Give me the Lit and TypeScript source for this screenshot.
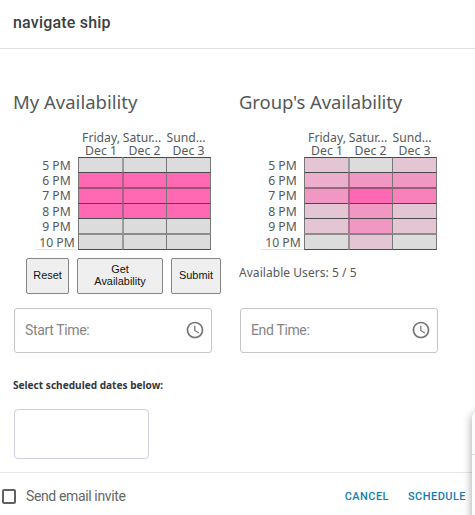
import { LitElement, html, css } from "lit";
import { customElement, property } from "lit/decorators.js";

@customElement("availability-grid")
class AvailabilityGrid extends LitElement {
  @property({ attribute: false }) levels: number[][] = [];

  static styles = css`
    :host { display: block; color: #55595b; font-family: "Noto Sans", "Open Sans", sans-serif; }
    .grid {
      display: grid;
      grid-template-columns: 43px 44px 44px 45px;
      grid-template-rows: 27px 15px 15px 16px 15px 15px 17px;
      margin-left: 21px;
      width: 176px;
    }
    .day { display: grid; grid-template-rows: 13px 13px; padding-top: 1px; font-size: 12.2px; line-height: 13px; white-space: nowrap; justify-items: center; }
    .day.first { padding-left: 2px; }
    .day.mid { margin-left: -4px; }
    .day.last { margin-right: 5px; }
    .day.mid .date { padding-left: 5px; }
    .day.last .date { padding-left: 5px; }
    .time { font-size: 12.2px; line-height: 17px; text-align: center; white-space: nowrap; }
    .time.end { border-bottom: 1px solid #e2e2e2; box-sizing: border-box; line-height: 19px; padding-left: 1px; }
    .cell { box-sizing: border-box; border-left: 1px solid #777; border-top: 1px solid #4a4a4a; }
    .cell.soft { border-top: 2px solid rgba(60, 60, 60, .5); }
    .cell.middle { border-left: 2px solid rgba(90, 90, 90, .5); }
    .cell.right { border-right: 1px solid #777; }
    .cell.bottom { border-bottom: 1px solid #4a4a4a; }
    .l0 { background-color: #dcdcdc; }
    .l1 { background-color: #e4c5d4; }
    .l2 { background-color: #ebaecc; }
    .l3 { background-color: #f197c3; }
    .l4 { background-color: #f880bb; }
    .l5 { background-color: #ff69b4; }
  `;

  render() {
    const times = ["5 PM", "6 PM", "7 PM", "8 PM", "9 PM", "10 PM"];
    return html`<div class="grid">
      <div></div>
      <div class="day first"><span>Friday,</span><span class="date">Dec 1</span></div>
      <div class="day mid"><span>Satur...</span><span class="date">Dec 2</span></div>
      <div class="day last"><span>Sund...</span><span class="date">Dec 3</span></div>
      ${times.map((t, r) => html`
        <div class="time ${r === 5 ? "end" : ""}">${t}</div>
        ${this.levels[r].map((l, c) => html`<div class="cell l${l} ${c === 1 ? "middle" : ""} ${c === 2 ? "right" : ""} ${r === 2 || r === 5 ? "soft" : ""} ${r === 5 ? "bottom" : ""}"></div>`)}
      `)}
    </div>`;
  }
}

@customElement("time-field")
class TimeField extends LitElement {
  @property() label = "";

  static styles = css`
    :host {
      display: flex; align-items: center; justify-content: space-between;
      box-sizing: border-box; width: 198px; height: 45px; padding: 0 6px 1px 10px;
      border: 1px solid #c6c6c6; border-radius: 3px;
      font: 14px/18px Roboto, sans-serif; color: #858585; letter-spacing: -0.35px;
    }
    svg { width: 20px; height: 20px; fill: #737373; display: block; }
  `;

  render() {
    return html`<span>${this.label}</span>
      <svg viewBox="0 0 24 24"><path d="M11.99 2C6.47 2 2 6.48 2 12s4.47 10 9.99 10C17.52 22 22 17.52 22 12S17.52 2 11.99 2zM12 20c-4.42 0-8-3.58-8-8s3.58-8 8-8 8 3.58 8 8-3.58 8-8 8zM12.5 7H11v6l5.25 3.15.75-1.23-4.5-2.67z"/></svg>`;
  }
}

@customElement("app-root")
class AppRoot extends LitElement {
  static styles = css`
    :host {
      display: flex; flex-direction: column; position: relative; overflow: hidden;
      width: 475px; height: 515px; background: #fff; color: #55595b;
      font-family: "Noto Sans", "Open Sans", sans-serif;
    }
    header {
      box-sizing: border-box; height: 49px; padding: 13px 13px 0; border-bottom: 1px solid #e0e0e0;
      font: 500 16px/20px Roboto, sans-serif; color: #3c4043; letter-spacing: 0.2px;
    }
    main { display: grid; grid-template-columns: 226px 226px; padding-left: 14px; height: 423px; align-content: start; }
    h2 { margin: 41px 0 0 -1px; font-size: 18.5px; font-weight: 400; line-height: 24px; height: 25px; white-space: nowrap; }
    .group { letter-spacing: -0.1px; }
    availability-grid { margin-top: 15px; }
    .actions { display: flex; gap: 8px; margin: 8px 0 0 12px; height: 36px; }
    button {
      box-sizing: border-box; padding: 0 0 2px; border: 1px solid #858585; border-radius: 2px; background: #efefef;
      font: 10.9px/12px "Liberation Sans", sans-serif; color: #111;
    }
    .reset { width: 43px; }
    .get { width: 86px; }
    .submit { width: 50px; }
    .users { margin: 14px 0 0 -1px; height: 30px; font-size: 12px; line-height: 17px; white-space: nowrap; letter-spacing: 0.05px; }
    time-field { margin-top: 14px; }
    .pick { margin: 24px 0 0 -1px; font-size: 10.1px; line-height: 16px; font-weight: 700; white-space: nowrap; color: #33383b; }
    .dates { box-sizing: border-box; width: 135px; height: 50px; margin-top: 16px; border: 1px solid #cfcfe2; border-radius: 4px; }
    footer { display: flex; align-items: center; box-sizing: border-box; height: 43px; border-top: 1px solid #e6e6e6; padding: 5px 9px 0 2px; font: 14px/18px Roboto, sans-serif; color: #64686b; }
    .check { box-sizing: border-box; width: 14px; height: 15px; border: 2px solid #626262; border-radius: 2px; margin-right: 10px; }
    .invite { letter-spacing: -0.37px; padding-bottom: 1px; }
    .link { font-size: 11px; font-weight: 500; color: #117db0; letter-spacing: 0.45px; }
    .cancel { margin-left: auto; margin-right: 19px; }
    .panel { position: absolute; left: 472px; top: 410px; width: 60px; height: 150px; border-radius: 8px; background: #fff; box-shadow: 0 3px 10px rgba(0,0,0,.38); }
    .panel-head { height: 44px; border-bottom: 1px solid #ddd; }
  `;

  render() {
    const mine = [[0,0,0],[5,5,5],[5,5,5],[5,5,5],[0,0,0],[0,0,0]];
    const group = [[1,0,1],[2,3,3],[3,5,4],[1,3,1],[1,3,1],[0,1,0]];
    return html`
      <header>navigate ship</header>
      <main>
        <section>
          <h2>My Availability</h2>
          <availability-grid .levels=${mine}></availability-grid>
          <div class="actions">
            <button class="reset">Reset</button>
            <button class="get">Get<br>Availability</button>
            <button class="submit">Submit</button>
          </div>
          <time-field label="Start Time:"></time-field>
          <div class="pick">Select scheduled dates below:</div>
          <div class="dates"></div>
        </section>
        <section>
          <h2 class="group">Group's Availability</h2>
          <availability-grid .levels=${group}></availability-grid>
          <div class="users">Available Users: 5 / 5</div>
          <time-field label="End Time:"></time-field>
        </section>
      </main>
      <footer>
        <span class="check"></span><span class="invite">Send email invite</span>
        <span class="link cancel">CANCEL</span><span class="link">SCHEDULE</span>
      </footer>
      <div class="panel"><div class="panel-head"></div></div>
    `;
  }
}
